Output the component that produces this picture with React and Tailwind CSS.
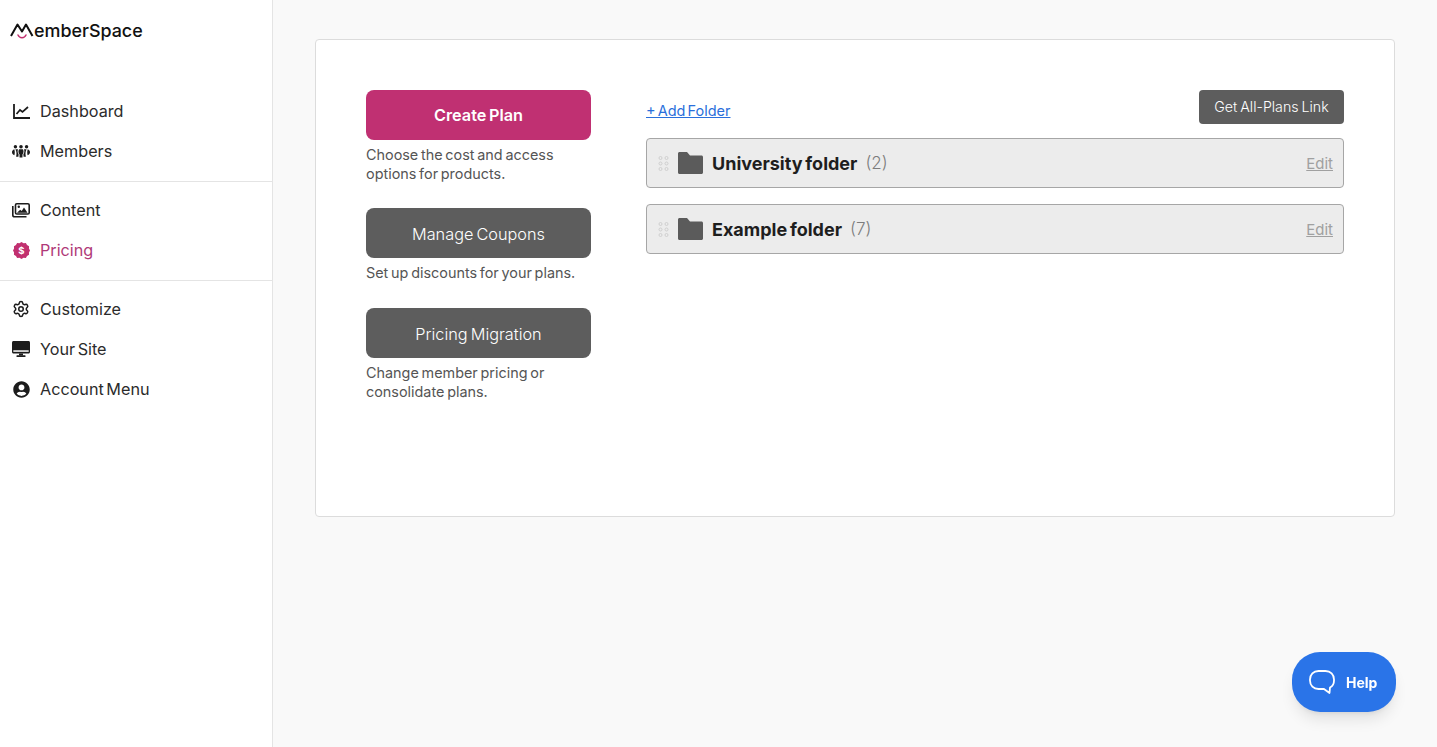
import React from "react";
import { Settings } from "lucide-react";
import { FaUserCircle } from "react-icons/fa";

const font = "font-['Inter','Liberation_Sans',sans-serif]";

const Logo = () => (
  <div className="flex items-center h-[30px] pl-[10px]">
    <svg width="24" height="18" viewBox="0 0 24 18" fill="none">
      <path d="M1 14 L7.5 2.5 L12 9.5 L16 2.5 L22.5 14" stroke="#111" strokeWidth="2" strokeLinejoin="round" />
      <path d="M8 13 C9.5 16.5 14.5 16.5 16 13" stroke="#c1306f" strokeWidth="1.5" strokeLinecap="round" />
    </svg>
    <span className="text-[17.9px] font-medium text-[#111] leading-none">emberSpace</span>
  </div>
);

const ChartIcon = () => (
  <svg width="17" height="15" viewBox="0 0 17 15" fill="none" stroke="#1c1c1c" strokeWidth="1.8">
    <path d="M1 0v14h16" />
    <path d="M3.5 10l3.5-4 2.5 2 5.5-5" strokeWidth="1.7" />
  </svg>
);

const MembersIcon = () => (
  <svg width="21" height="15" viewBox="0 0 21 15" fill="#1c1c1c">
    <circle cx="4" cy="2" r="2" />
    <circle cx="10.5" cy="2" r="2.1" />
    <circle cx="17" cy="2" r="2" />
    <path d="M2.7 5C.9 5.6 0 7 0 8.5s1 3 2.800 3.500c.6-2 .6-5-.1-7z" />
    <path d="M18.300 5c1.800.6 2.700 2 2.700 3.500s-1 3-2.800 3.500c-.6-2-.6-5 .1-7z" />
    <path d="M4 5h3c-.7 1.600-.6 4.200.7 5.600L7.500 13.500H4.800C5.600 10.500 5.300 7.500 4 5z" />
    <path d="M17 5h-3c.7 1.600.6 4.200-.7 5.600l.2 2.900h2.700C15.400 10.500 15.700 7.500 17 5z" />
    <path d="M8.300 5h4.400c1.100 1.500 1.100 4.500-.5 6v3.500H8.800V11C7.200 9.500 7.200 6.500 8.300 5z" />
  </svg>
);

const ContentIcon = () => (
  <svg width="18" height="15" viewBox="0 0 18 15" fill="none" stroke="#1c1c1c">
    <rect x="3.5" y="0.8" width="13.700" height="10.200" rx="1.300" strokeWidth="1.600" />
    <path d="M0.8 3v9c0 1 .8 1.800 1.800 1.800h11.900" strokeWidth="1.600" />
    <circle cx="6.8" cy="3.800" r="1.200" fill="#1c1c1c" stroke="none" />
    <path d="M5 9.800l3.200-3 1.500 1.200 2.300-3.500 3.500 5.300z" fill="#1c1c1c" stroke="none" />
  </svg>
);

const DesktopIcon = () => (
  <svg width="18" height="16" viewBox="0 0 18 16" fill="#1c1c1c">
    <path d="M1.5 0h15c.8 0 1.500.7 1.500 1.500V11c0 .8-.7 1.500-1.500 1.500h-15C.7 12.500 0 11.800 0 11V1.500C0 .7.7 0 1.500 0z" />
    <rect x="1.3" y="9.300" width="15.400" height="1.500" fill="#fff" />
    <rect x="7" y="12.500" width="4" height="2" />
    <rect x="4.5" y="14.300" width="9" height="1.700" rx="0.5" />
  </svg>
);

const PriceBadge = () => (
  <svg width="17" height="17" viewBox="0 0 16 16">
    <path
      fill="#c1306f"
      d="M8 0l1.900 1.100 2.200-.1 1.100 1.900 1.900 1.100-.1 2.200L16 8l-1 1.800.1 2.200-1.900 1.100-1.100 1.900-2.200-.1L8 16l-1.900-1.100-2.200.1-1.100-1.900L.9 12 1 9.800 0 8l1-1.800L.9 4l1.900-1.100L3.900 1l2.200.1z"
    />
    <text x="8" y="11.2" textAnchor="middle" fontSize="9" fontWeight="700" fill="#fff" fontFamily="Inter, sans-serif">$</text>
  </svg>
);

const NavItem = ({ icon, label, active }) => (
  <div className={`flex items-center h-[40px] pl-[12px] text-[16.2px] [word-spacing:-2px] ${active ? "text-[#b03a78]" : "text-[#2b2b2b]"}`}>
    <span className="w-[18px] flex justify-center text-[#1c1c1c]">{icon}</span>
    <span className="ml-[10px]">{label}</span>
  </div>
);

const Sidebar = () => (
  <aside className="w-[273px] shrink-0 bg-white border-r border-[#e4e4e4] pt-[16px]">
    <Logo />
    <nav className="mt-[45px]">
      <div className="pb-[10px] border-b border-[#e4e4e4]">
        <NavItem icon={<ChartIcon />} label="Dashboard" />
        <NavItem icon={<MembersIcon />} label="Members" />
      </div>
      <div className="pt-[8px] pb-[10px] border-b border-[#e4e4e4]">
        <NavItem icon={<ContentIcon />} label="Content" />
        <NavItem icon={<PriceBadge />} label="Pricing" active />
      </div>
      <div className="pt-[8px]">
        <NavItem icon={<Settings size={18} strokeWidth={2} />} label="Customize" />
        <NavItem icon={<DesktopIcon />} label="Your Site" />
        <NavItem icon={<FaUserCircle size={17} />} label="Account Menu" />
      </div>
    </nav>
  </aside>
);

const ActionBlock = ({ label, primary, text, className }) => (
  <div className={className}>
    <button
      className={`w-full h-[50px] rounded-[8px] text-[16.3px] text-white [word-spacing:-1.5px] ${
        primary ? "bg-[#c03072] font-semibold pt-px" : "bg-[#5d5d5d] font-light pt-[2px]"
      }`}
    >
      {label}
    </button>
    <p className="mt-[5px] text-[14.4px] leading-[19px] text-[#555] [word-spacing:-1.3px]">{text}</p>
  </div>
);

const DragDots = () => (
  <svg width="11" height="15" viewBox="0 0 11 15" fill="none" stroke="#cfcfcf" strokeWidth="1">
    {[2, 7.5, 13].map((y) => (
      <g key={y}>
        <circle cx="2.5" cy={y} r="1.5" />
        <circle cx="8.5" cy={y} r="1.5" />
      </g>
    ))}
  </svg>
);

const FolderIcon = () => (
  <svg width="25" height="22" viewBox="0 0 25 22" fill="#5b5b5b" className="ml-[9px]">
    <path d="M1.5 0H9l3 3.500h11.500c.8 0 1.500.7 1.500 1.500v15.500c0 .8-.7 1.500-1.500 1.500h-22C.7 22 0 21.300 0 20.500v-19C0 .7.7 0 1.500 0z" />
  </svg>
);

const FolderRow = ({ name, count }) => (
  <div className="flex items-center h-[50px] rounded-[4px] border border-[#a6a6a6] bg-[#ececec] pl-[11px] pr-[10px]">
    <DragDots />
    <FolderIcon />
    <span className="ml-[9px] pt-px text-[18px] font-bold text-[#1e1e1e] [word-spacing:-1.5px]">{name}</span>
    <span className="ml-[8px] pt-px text-[17px] font-light text-[#7c7c7c]">({count})</span>
    <a className="ml-auto pt-[3px] text-[15px] text-[#a0a0a0] underline">Edit</a>
  </div>
);

const HelpButton = () => (
  <button className="fixed left-[1292px] top-[652px] w-[104px] h-[60px] rounded-[28px] bg-[#2a74e8] shadow-lg flex items-center pl-[16px] text-white">
    <svg width="28" height="27" viewBox="0 0 28 27" fill="none">
      <path
        d="M10.5 2h7C22.500 2 26 5.500 26 10.500v1c0 3.500-1.500 5.700-4 7l-.5 5.500-5.500-4h-5.500C5.500 20 2 16.500 2 11.500v-1C2 5.500 5.500 2 10.500 2z"
        stroke="#fff"
        strokeWidth="1.8"
        strokeLinejoin="round"
      />
    </svg>
    <span className="ml-[10px] text-[14px] font-bold">Help</span>
  </button>
);

export default function App() {
  return (
    <div className={`flex h-[747px] overflow-hidden bg-[#f9f9f9] ${font}`}>
      <Sidebar />
      <main className="flex-1 pt-[39px] pl-[42px] pr-[42px]">
        <section className="flex h-[478px] rounded-[4px] border border-[#dcdcdc] bg-white pt-[50px] pl-[50px] pr-[50px]">
          <div className="w-[225px] shrink-0 flex flex-col gap-[25px]">
            <ActionBlock label="Create Plan" primary text={<>Choose the cost and access<br />options for products.</>} />
            <ActionBlock className="pb-px" label="Manage Coupons" text="Set up discounts for your plans." />
            <ActionBlock label="Pricing Migration" text={<>Change member pricing or<br />consolidate plans.</>} />
          </div>
          <div className="flex-1 ml-[55px]">
            <div className="flex items-start justify-between h-[48px]">
              <a className="mt-[10px] text-[14.5px] text-[#2a6fdb] underline [word-spacing:-2px]">+ Add Folder</a>
              <button className="w-[145px] h-[34px] rounded-[4px] bg-[#5d5d5d] text-[14.2px] font-light text-white [word-spacing:-1px]">Get All-Plans Link</button>
            </div>
            <div className="flex flex-col gap-[16px]">
              <FolderRow name="University folder" count={2} />
              <FolderRow name="Example folder" count={7} />
            </div>
          </div>
        </section>
      </main>
      <HelpButton />
    </div>
  );
}
